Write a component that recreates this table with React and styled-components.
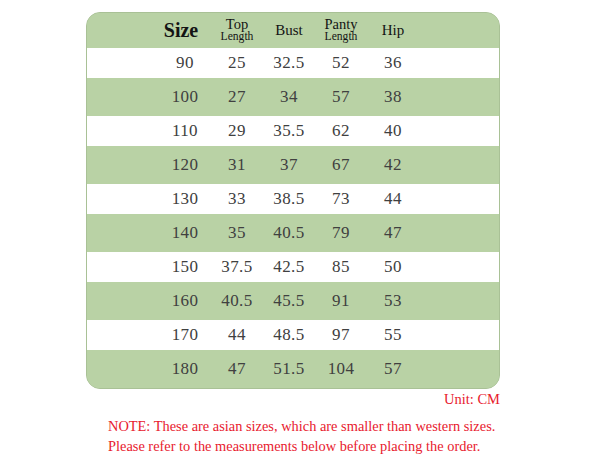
import React from 'react';
import styled, { createGlobalStyle } from 'styled-components';

const GlobalStyle = createGlobalStyle`
  html, body {
    margin: 0;
    padding: 0;
    background: #ffffff;
  }
  body {
    font-family: "Liberation Serif", "Times New Roman", serif;
  }
`;

const rows = [
  ['90', '25', '32.5', '52', '36'],
  ['100', '27', '34', '57', '38'],
  ['110', '29', '35.5', '62', '40'],
  ['120', '31', '37', '67', '42'],
  ['130', '33', '38.5', '73', '44'],
  ['140', '35', '40.5', '79', '47'],
  ['150', '37.5', '42.5', '85', '50'],
  ['160', '40.5', '45.5', '91', '53'],
  ['170', '44', '48.5', '97', '55'],
  ['180', '47', '51.5', '104', '57'],
];

const Page = styled.div`
  width: 600px;
  height: 473px;
  padding: 12px 0 0 86px;
  box-sizing: border-box;
`;

const Chart = styled.div`
  width: 414px;
  box-sizing: border-box;
  border: 1px solid #a9c196;
  border-radius: 14px;
  overflow: hidden;
  background: #b9d2a5;
`;

const Row = styled.div`
  display: grid;
  grid-template-columns: 72px repeat(5, 52px) 1fr;
  align-items: center;
  height: ${(p) => p.$h}px;
  background: ${(p) => (p.$white ? '#ffffff' : '#b9d2a5')};
`;

const Head = styled.div`
  text-align: center;
  color: #141414;
  font-size: ${(p) => p.$size || 15}px;
  font-weight: ${(p) => (p.$bold ? 700 : 400)};
  padding-right: ${(p) => p.$shift || 0}px;
`;

const Stack = styled.div`
  display: flex;
  flex-direction: column;
  align-items: center;
  color: #141414;
  line-height: 1;
  margin-top: -1px;
`;

const Big = styled.span`
  font-size: 14.5px;
`;

const Small = styled.span`
  font-size: 11.6px;
`;

const Cell = styled.div`
  text-align: center;
  font-size: 17px;
  color: #404040;
  letter-spacing: 0.4px;
`;

const Unit = styled.div`
  width: 414px;
  text-align: right;
  color: #e8202e;
  font-size: 14.5px;
  margin-top: 2px;
`;

const Note = styled.p`
  margin: 9px 0 0 22px;
  color: #e8202e;
  font-size: 14.4px;
  line-height: 19.5px;
`;

export default function App() {
  return (
    <Page>
      <GlobalStyle />
      <Chart>
        <Row $h={35}>
          <span />
          <Head $bold $size={20} $shift={8}>Size</Head>
          <Stack>
            <Big>Top</Big>
            <Small>Length</Small>
          </Stack>
          <Head>Bust</Head>
          <Stack>
            <Big>Panty</Big>
            <Small>Length</Small>
          </Stack>
          <Head>Hip</Head>
        </Row>
        {rows.map((r, i) => (
          <Row key={r[0]} $white={i % 2 === 0} $h={i % 2 === 0 ? 30 : 38}>
            <span />
            {r.map((v, j) => (
              <Cell key={j}>{v}</Cell>
            ))}
          </Row>
        ))}
      </Chart>
      <Unit>Unit: CM</Unit>
      <Note>
        NOTE: These are asian sizes, which are smaller than western sizes.
        <br />
        Please refer to the measurements below before placing the order.
      </Note>
    </Page>
  );
}
